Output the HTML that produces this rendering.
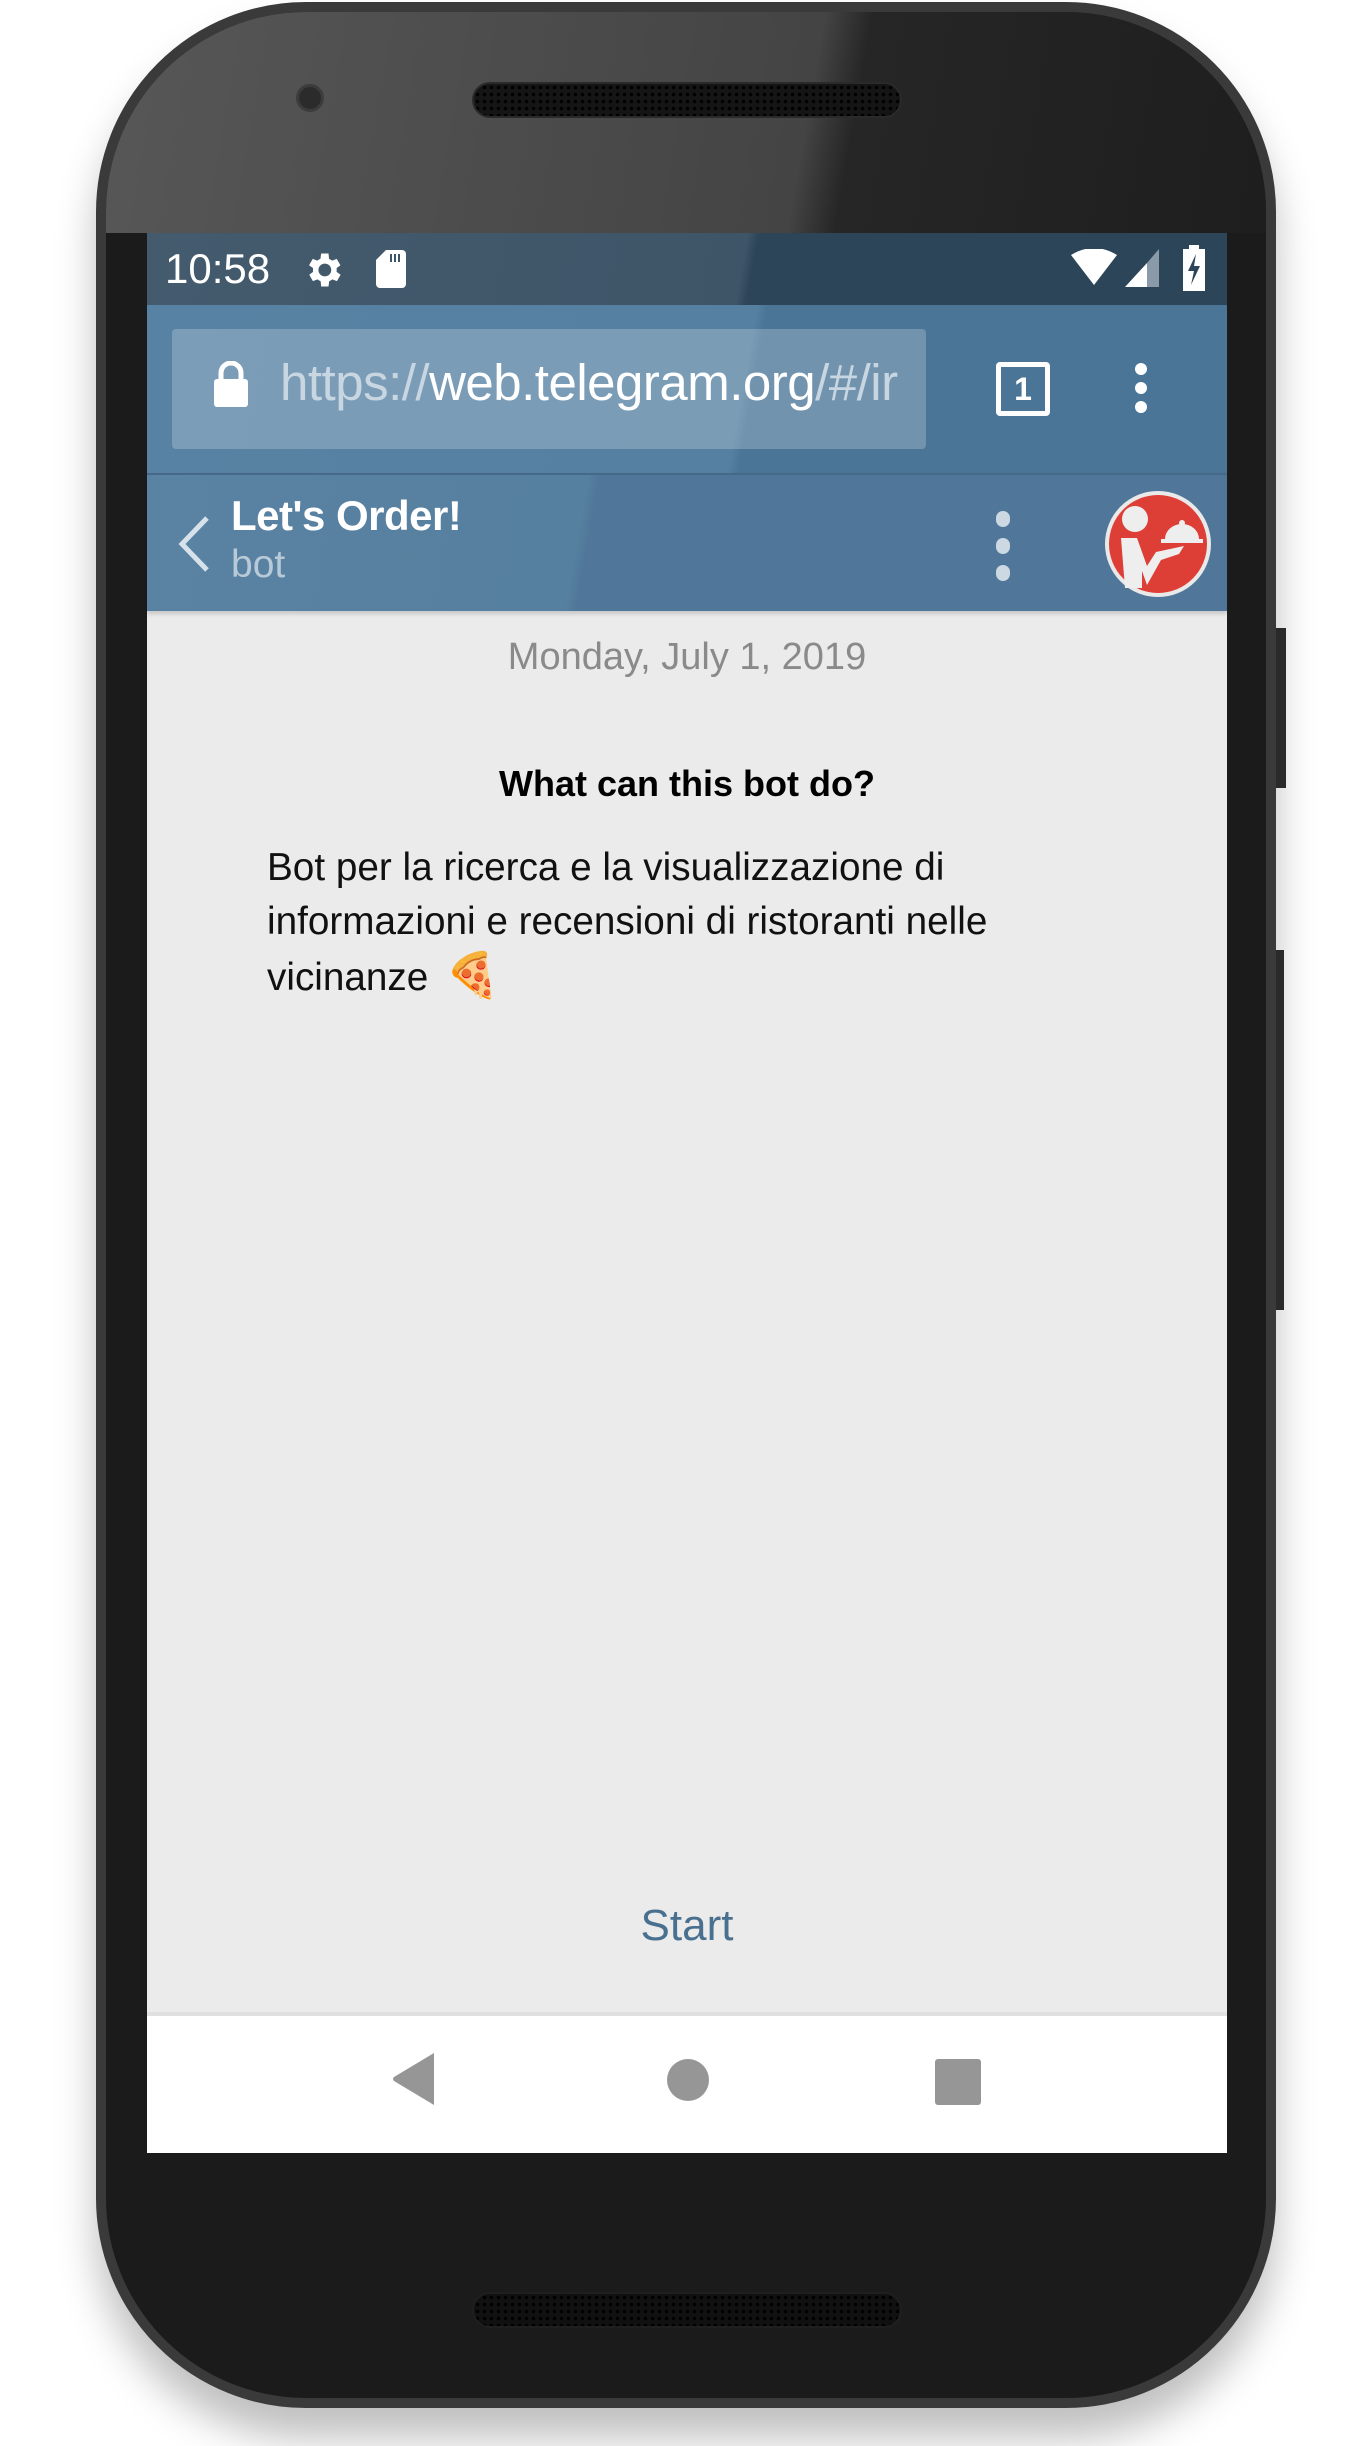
<!DOCTYPE html>
<html><head><meta charset="utf-8"><style>
*{margin:0;padding:0;box-sizing:border-box}
body{width:1370px;height:2446px;background:#fff;position:relative;overflow:hidden;font-family:"Liberation Sans",sans-serif}
.abs{position:absolute}
.phone{left:96px;top:2px;width:1180px;height:2406px;border-radius:210px;background:#1b1b1b;border:10px solid #3a3a3a;box-shadow:0 30px 40px rgba(0,0,0,.25);overflow:hidden}
.glare{left:0;top:0;width:1160px;height:221px;background:linear-gradient(100deg,#575757 0%,#444 60%,#262626 64%,#1e1e1e 100%)}
.screen{left:147px;top:233px;width:1080px;height:1920px;background:#ebebeb;overflow:hidden}
.status{left:0;top:0;width:1080px;height:72px;background:linear-gradient(100deg,#445b6e 0%,#3e5568 55%,#2c4558 56%,#2c4558 100%)}
.toolbar{left:0;top:72px;width:1080px;height:168px;background:linear-gradient(100deg,#5882a3 0%,#5580a1 55%,#4a7596 56%,#4a7596 100%)}
.header{left:0;top:240px;width:1080px;height:138px;background:linear-gradient(100deg,#5a82a3 0%,#56809f 40%,#50779a 41%,#50779a 100%);border-top:2px solid #46698a;box-shadow:0 3px 4px rgba(0,0,0,.15)}
.nav{left:0;top:1779px;width:1080px;height:141px;background:#fff;border-top:4px solid #e0e0e0}
</style></head><body>
<div class="abs phone"><div class="abs glare"></div></div>
<div class="abs" style="left:472px;top:82px;width:430px;height:36px;border-radius:18px;background:#151515;background-image:radial-gradient(#000 1.5px,transparent 2px);background-size:7px 7px;border:2px solid #2a2a2a"></div>
<div class="abs" style="left:296px;top:84px;width:28px;height:28px;border-radius:50%;background:#2b2b2b;border:3px solid #3c3c3c"></div>
<div class="abs" style="left:472px;top:2292px;width:430px;height:36px;border-radius:18px;background:#111;background-image:radial-gradient(#000 1.5px,transparent 2px);background-size:7px 7px;border:2px solid #1f1f1f"></div>
<div class="abs" style="left:1276px;top:628px;width:10px;height:160px;background:#2a2a2a"></div>
<div class="abs" style="left:1276px;top:950px;width:8px;height:360px;background:#2a2a2a"></div>

<div class="abs screen">
 <div class="abs status">
  <div class="abs" style="left:18px;top:12px;color:#fff;font-size:42px;">10:58</div>
  <svg class="abs" style="left:154px;top:15px" width="44" height="44" viewBox="0 0 24 24"><path fill="#fff" d="M19.4 13a7.5 7.5 0 000-2l2.1-1.6-2-3.5-2.5 1a7 7 0 00-1.7-1L15 3h-4l-.4 2.9a7 7 0 00-1.7 1l-2.5-1-2 3.5L6.6 11a7.5 7.5 0 000 2l-2.1 1.6 2 3.5 2.5-1a7 7 0 001.7 1L11 21h4l.4-2.9a7 7 0 001.7-1l2.5 1 2-3.5zM13 15.5a3.5 3.5 0 110-7 3.5 3.5 0 010 7z"/></svg>
  <svg class="abs" style="left:229px;top:17px" width="30" height="38" viewBox="0 0 15 19"><path fill="#fff" d="M5 0h8a2 2 0 012 2v15a2 2 0 01-2 2H2a2 2 0 01-2-2V5z"/><path fill="#3e5568" d="M7 2h1v4H7zM9 2h1v4H9zM11 2h1v4h-1z"/></svg>
  <svg class="abs" style="left:924px;top:16px" width="46" height="38" viewBox="0 0 46 38"><path fill="#fff" d="M0 6Q23-8 46 6L23 36z"/></svg>
  <svg class="abs" style="left:978px;top:16px" width="34" height="38" viewBox="0 0 34 38"><path fill="#fff" d="M0 38L22 14V38z"/><path fill="#8a9aa8" d="M22 14L34 0V38H22z"/></svg>
  <svg class="abs" style="left:1036px;top:12px" width="22" height="46" viewBox="0 0 22 46"><path fill="#fff" d="M6 0h10v4h6v42H0V4h6z"/><path fill="#2c4558" d="M13 9L5 26h6l-3 14 9-19h-6z"/></svg>
 </div>
 <div class="abs toolbar">
  <div class="abs" style="left:25px;top:24px;width:754px;height:120px;background:rgba(255,255,255,.22);border-radius:4px"></div>
  <svg class="abs" style="left:67px;top:56px" width="34" height="46" viewBox="0 0 34 46"><rect x="0" y="18" width="34" height="28" rx="3" fill="#fff"/><path d="M7 20V12a10 10 0 0120 0v8" stroke="#fff" stroke-width="5" fill="none"/></svg>
  <div class="abs" style="left:133px;top:48px;font-size:51px;color:#c8d6e2;white-space:nowrap;letter-spacing:-0.5px;width:633px;overflow:hidden">https://<span style="color:#fff">web.telegram.org</span>/#/ir</div>
  <div class="abs" style="left:849px;top:57px;width:54px;height:54px;border:5px solid #fff;border-radius:4px;color:#fff;font-size:32px;font-weight:bold;text-align:center;line-height:44px">1</div>
  <div class="abs" style="left:988px;top:58px;width:12px;height:12px;border-radius:50%;background:#fff;box-shadow:0 19px 0 #fff,0 38px 0 #fff"></div>
 </div>
 <div class="abs header">
  <svg class="abs" style="left:30px;top:40px" width="34" height="58" viewBox="0 0 34 58"><path d="M30 3L5 29l25 26" stroke="#d6e1ea" stroke-width="5" fill="none"/></svg>
  <div class="abs" style="left:84px;top:17px;color:#fff;font-size:42px;font-weight:bold;letter-spacing:-0.5px">Let's Order!</div>
  <div class="abs" style="left:84px;top:68px;color:#b8cad8;font-size:39px">bot</div>
  <div class="abs" style="left:849px;top:36px;width:14px;height:16px;border-radius:7px;background:#ccd8e2;box-shadow:0 27px 0 #ccd8e2,0 54px 0 #ccd8e2"></div>
  <svg class="abs" style="left:956px;top:14px" width="110" height="110" viewBox="0 0 110 110">
   <circle cx="55" cy="55" r="53" fill="#e9e9e9"/><circle cx="55" cy="55" r="49" fill="#dd3e36"/>
   <circle cx="32" cy="30" r="13" fill="#eee"/>
   <path fill="#eee" d="M18 49h16l10 28 9-14 28-6-5 8-18 6-14 25H44l-5-14v17H22z"/>
   <path fill="#eee" d="M62 50a17 15 0 0134 0z"/><rect x="58" y="50" width="42" height="4" fill="#eee"/><circle cx="79" cy="34" r="3" fill="#eee"/>
  </svg>
 </div>
 <div class="abs" style="left:0;top:403px;width:1080px;text-align:center;color:#8a8a8a;font-size:38px">Monday, July 1, 2019</div>
 <div class="abs" style="left:0;top:530px;width:1080px;text-align:center;color:#000;font-size:36px;font-weight:bold">What can this bot do?</div>
 <div class="abs" style="left:120px;top:608px;color:#111;font-size:38.7px;line-height:54px;white-space:nowrap">Bot per la ricerca e la visualizzazione di<br>informazioni e recensioni di ristoranti nelle<br>vicinanze <span style="font-size:44px;margin-left:6px">🍕</span></div>
 <div class="abs" style="left:0;top:1668px;width:1080px;text-align:center;color:#4a7090;font-size:44px">Start</div>
 <div class="abs nav">
  <svg class="abs" style="left:245px;top:37px" width="44" height="54" viewBox="0 0 44 54"><path fill="#969696" d="M42 0V52L2 28Q0 26 2 24z"/></svg>
  <div class="abs" style="left:520px;top:43px;width:42px;height:42px;border-radius:50%;background:#969696"></div>
  <div class="abs" style="left:788px;top:43px;width:46px;height:46px;border-radius:3px;background:#969696"></div>
 </div>
</div>
</body></html>
